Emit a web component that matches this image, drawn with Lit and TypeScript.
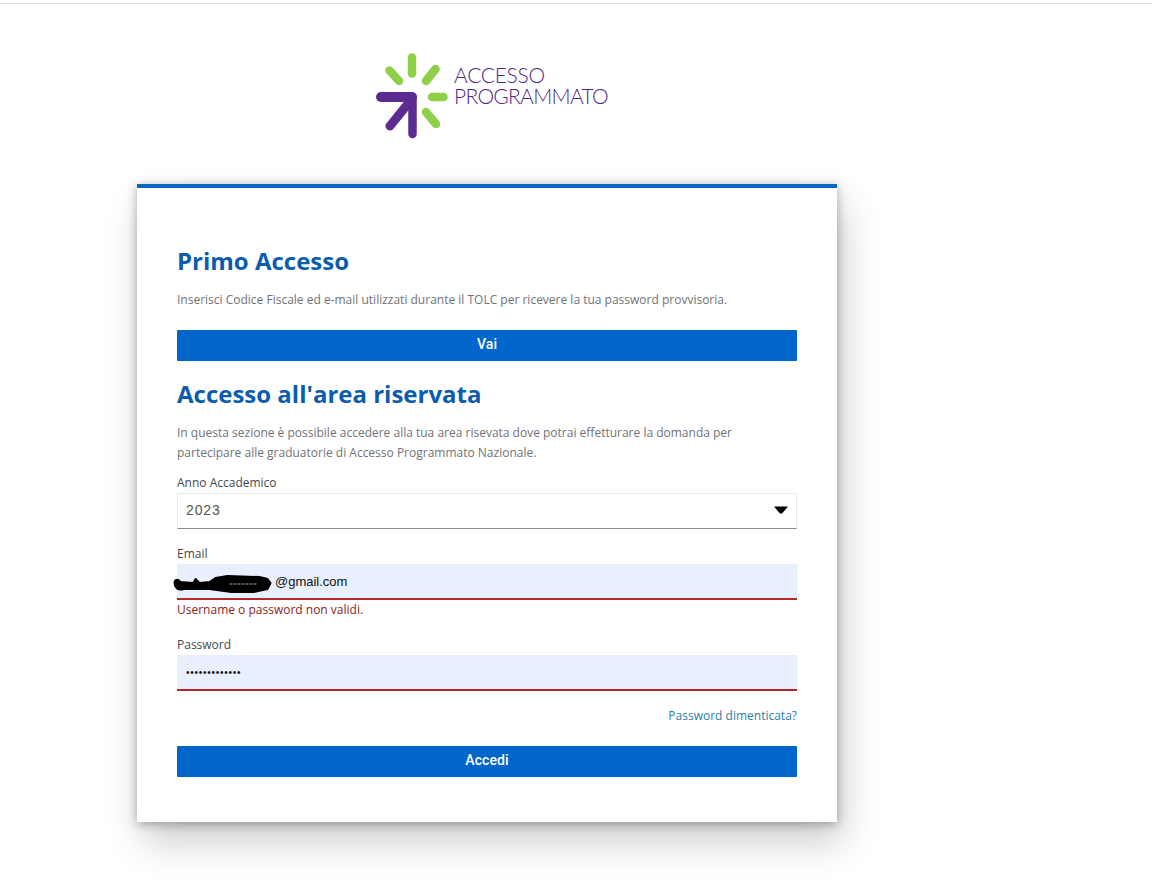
import { LitElement, html, css } from "lit";
import { customElement } from "lit/decorators.js";

@customElement("app-root")
export class AppRoot extends LitElement {
  static styles = css`
    :host { display: block; background: #fff; min-height: 891px; font-family: "Open Sans", "Liberation Sans", sans-serif; overflow: hidden; }
    .topline { height: 3px; border-bottom: 1px solid #dcdcdc; background: #fff; }
    .logo-row { height: 180px; padding-left: 370px; box-sizing: border-box; display: flex; align-items: flex-start; }
    .logo { display: flex; align-items: flex-start; padding-top: 41px; }
    .logo svg { display: block; width: 84px; height: 100px; flex: none; }
    .logo-text { margin-left: 0; padding-top: 19px; color: #4d2a82; font-family: "Lato", sans-serif; font-weight: 300; font-size: 21px; line-height: 21px; letter-spacing: -0.7px; }
    .logo-text div { white-space: nowrap; }
    .logo-text .l1 { letter-spacing: -0.3px; }
    .card { margin-left: 137px; width: 700px; height: 638px; box-sizing: border-box; background: #fff; border-top: 4px solid #0a66c2; padding: 0 40px; box-shadow: 0 2px 10px rgba(0,0,0,.3), 6px 20px 36px rgba(0,0,0,.2); }
    h2 { margin: 0; color: #0b5cad; font-size: 24px; line-height: 32px; font-weight: 700; }
    h2.first { padding-top: 57px; }
    h2.second { padding-top: 17px; }
    p { margin: 0; color: #6f7378; font-size: 12px; line-height: 20px; }
    p.one { margin-top: 13px; }
    p.two { margin-top: 13px; width: 600px; }
    .btn { height: 31px; background: #0066cc; color: #fff; border: 0; border-radius: 1px; width: 100%; display: block; padding: 0 0 4px; font-family: "Roboto", sans-serif; font-weight: 500; font-size: 14px; letter-spacing: 0.1px; text-align: center; }
    .vai { margin-top: 20px; }
    label { display: block; color: #44484c; font-size: 12px; line-height: 16px; }
    label.anno { margin-top: 12px; }
    .select { margin-top: 2px; height: 36px; box-sizing: border-box; border: 1px solid #eaeaea; border-bottom: 1px solid #8a8a8a; display: flex; align-items: center; justify-content: space-between; padding: 0 8px 2px 8px; font-family: "Liberation Sans", sans-serif; font-size: 14px; letter-spacing: 0.9px; color: #555; }
    .select svg { display: block; width: 14px; height: 8px; }
    label.email { margin-top: 17px; }
    .input { position: relative; margin-top: 2px; height: 36px; box-sizing: border-box; background: #e8f0fe; border-bottom: 2px solid #b3262a; font-family: "Liberation Sans", sans-serif; font-size: 13px; color: #111; display: flex; align-items: center; padding: 0 0 0 9px; }
    .email-value { padding-left: 89px; }
    .scribble { position: absolute; left: -9px; top: 7px; width: 109px; height: 24px; }
    .error { color: #8c1c1c; font-size: 12px; line-height: 16px; margin-top: 2px; height: 19px; }
    label.password { margin-top: 16px; }
    .dots { letter-spacing: 0.75px; font-size: 10px; }
    .forgot { display: block; text-align: right; margin-top: 17px; color: #2a7fa8; font-size: 12px; line-height: 16px; text-decoration: none; }
    .accedi { margin-top: 22px; }
  `;

  render() {
    return html`
      <div class="topline"></div>
      <div class="logo-row">
        <div class="logo">
          <svg viewBox="370 45 84 100" fill="none" stroke-linecap="round" aria-label="Logo Accesso Programmato">
            <g stroke="#8fd048" stroke-width="8.5">
              <path d="M412 57.5V73.5" />
              <path d="M389.5 70.5L399 81" />
              <path d="M435.5 69L426 81" />
              <path d="M432 97H443.5" />
              <path d="M426 112L436 124" />
            </g>
            <g stroke="#5b2b92" stroke-linejoin="round">
              <path d="M381 97H412" stroke-width="10" />
              <path d="M412.5 97V134" stroke-width="8.5" />
              <path d="M390 126L411 100" stroke-width="9" />
            </g>
          </svg>
          <div class="logo-text"><div class="l1">ACCESSO</div><div>PROGRAMMATO</div></div>
        </div>
      </div>
      <main class="card">
        <h2 class="first">Primo Accesso</h2>
        <p class="one">Inserisci Codice Fiscale ed e-mail utilizzati durante il TOLC per ricevere la tua password provvisoria.</p>
        <button class="btn vai">Vai</button>
        <h2 class="second">Accesso all'area riservata</h2>
        <p class="two">In questa sezione è possibile accedere alla tua area risevata dove potrai effetturare la domanda per partecipare alle graduatorie di Accesso Programmato Nazionale.</p>
        <label class="anno">Anno Accademico</label>
        <div class="select">
          <span>2023</span>
          <svg viewBox="0 0 14 8"><path d="M0 0.5H14L8.5 7Q7 8.4 5.5 7Z" fill="#000" /></svg>
        </div>
        <label class="email">Email</label>
        <div class="input">
          <span class="email-value">@gmail.com</span>
          <svg class="scribble" viewBox="0 0 106 24" fill="none">
            <path d="M5 12C5 8 9 8 11 11L24 12L26 8L30 12L40 11L46 7L58 5L90 6L98 8L101 12L98 18L84 21L62 21L40 18L14 18C8 20 5 16 5 12Z" fill="#000" stroke="#000" stroke-width="2" stroke-linejoin="round" />
            <path d="M60 13H88" stroke="#a8a8a8" stroke-width="1" stroke-dasharray="3 1" />
          </svg>
        </div>
        <div class="error">Username o password non validi.</div>
        <label class="password">Password</label>
        <div class="input"><span class="dots">•••••••••••••</span></div>
        <a class="forgot" href="#">Password dimenticata?</a>
        <button class="btn accedi">Accedi</button>
      </main>
    `;
  }
}
